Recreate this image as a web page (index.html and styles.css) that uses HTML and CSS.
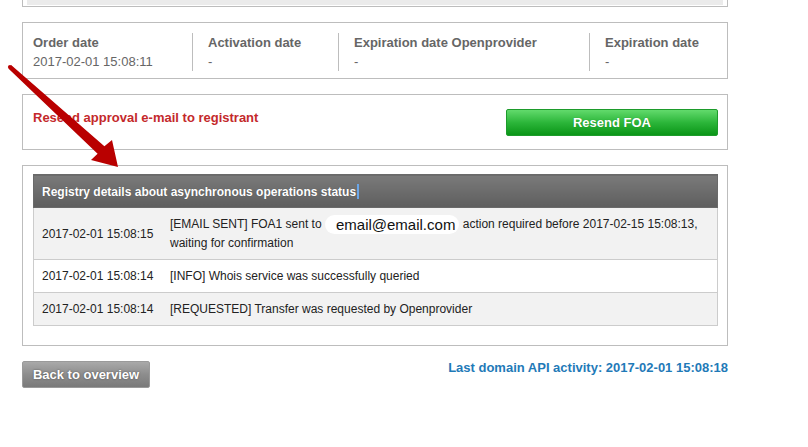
FILE: index.html
```html
<!DOCTYPE html>
<html>
<head>
<meta charset="utf-8">
<link rel="stylesheet" href="styles.css">
</head>
<body>
<div class="page">
  <div class="box top-box"><div class="top-fill"></div></div>

  <div class="box dates">
    <div class="col c1"><div class="label">Order date</div><div class="value">2017-02-01 15:08:11</div></div>
    <div class="col c2"><div class="label">Activation date</div><div class="value">-</div></div>
    <div class="col c3"><div class="label">Expiration date Openprovider</div><div class="value">-</div></div>
    <div class="col c4"><div class="label">Expiration date</div><div class="value">-</div></div>
  </div>

  <div class="box resend">
    <div class="resend-text">Resend approval e-mail to registrant</div>
    <button class="btn-green">Resend FOA</button>
  </div>

  <div class="box registry">
    <table class="ops">
      <thead>
        <tr><th colspan="2">Registry details about asynchronous operations status<span class="caret"></span></th></tr>
      </thead>
      <tbody>
        <tr class="alt">
          <td class="date">2017-02-01 15:08:15</td>
          <td class="msg">[EMAIL SENT] FOA1 sent to <span class="email">email@email.com</span> action required before 2017-02-15 15:08:13,<br>waiting for confirmation</td>
        </tr>
        <tr>
          <td class="date">2017-02-01 15:08:14</td>
          <td class="msg">[INFO] Whois service was successfully queried</td>
        </tr>
        <tr class="alt">
          <td class="date">2017-02-01 15:08:14</td>
          <td class="msg">[REQUESTED] Transfer was requested by Openprovider</td>
        </tr>
      </tbody>
    </table>
  </div>

  <div class="footer">
    <button class="btn-gray">Back to overview</button>
    <div class="last-activity">Last domain API activity: 2017-02-01 15:08:18</div>
  </div>
</div>

<svg class="arrow" width="130" height="180" viewBox="0 0 130 180">
  <polygon points="11.4,65.3 104.4,146.3 112,140 118,167 91,160 97.6,153.7 8.6,68.7" fill="#b90000"/>
  <circle cx="10" cy="67" r="2.1" fill="#b90000"/>
</svg>
</body>
</html>
```

FILE: styles.css
```css
html, body {
  margin: 0;
  padding: 0;
  background: #ffffff;
  font-family: "Liberation Sans", Arial, sans-serif;
}

.page {
  margin-left: 22px;
  width: 706px;
}

.box {
  box-sizing: border-box;
  border: 1px solid #bdbdbd;
  margin-bottom: 15px;
  background: #fff;
}

.top-box {
  border-top: none;
  padding: 0 4px 1px 4px;
}

.top-fill {
  height: 5px;
  background: #ebebeb;
}

/* dates */
.dates {
  display: grid;
  grid-template-columns: 169px 146px 251px 1fr;
  padding: 10px 0 7px 0;
}

.col {
  border-left: 1px solid #bdbdbd;
  padding-left: 15px;
  font-size: 13px;
  line-height: 19px;
  color: #666;
}

.col.c1 {
  border-left: none;
  padding-left: 10px;
}

.label {
  font-weight: bold;
}

/* resend */
.resend {
  display: flex;
  justify-content: space-between;
  align-items: flex-start;
  height: 56px;
  padding: 13px 9px 0 10px;
}

.resend-text {
  color: #c4292b;
  font-size: 13px;
  font-weight: bold;
  line-height: 19px;
}

.btn-green {
  width: 212px;
  height: 27px;
  margin-top: 1px;
  border: 1px solid #1d9b2b;
  border-radius: 2px;
  background: linear-gradient(#62da6c, #2cb63a 50%, #0a9517);
  color: #fff;
  font-family: "Liberation Sans", Arial, sans-serif;
  font-size: 13px;
  font-weight: bold;
  text-shadow: 0 0 1px rgba(0, 80, 0, 0.4);
  padding: 0;
}

/* registry */
.registry {
  padding: 8px 9px 19px 10px;
}

.ops {
  width: 685px;
  border-collapse: collapse;
  border: 1px solid #cccccc;
  font-size: 12px;
  color: #222;
}

.ops th {
  height: 33px;
  box-sizing: border-box;
  padding: 0 0 0 8px;
  text-align: left;
  color: #fff;
  font-weight: bold;
  font-size: 12px;
  background: linear-gradient(#7a7a7a, #5e5e5e);
  border: 1px solid #6a6a6a;
  text-shadow: 0 0 1px rgba(0, 0, 0, 0.3);
}

.caret {
  display: inline-block;
  width: 2px;
  height: 15px;
  margin-left: 1px;
  background: #6aa6e8;
  vertical-align: -3px;
}

.ops td {
  line-height: 19px;
  border-top: 1px solid #cccccc;
  vertical-align: middle;
}

.ops tr.alt td {
  background: #f2f2f2;
}

.ops td.date {
  width: 128px;
  padding: 7px 0 6px 8px;
  white-space: nowrap;
}

.ops td.msg {
  padding: 7px 8px 6px 0;
}

.email {
  display: inline-block;
  vertical-align: top;
  font-size: 15px;
  line-height: 19px;
  color: #111;
  background: #ffffff;
  border-radius: 10px;
  padding: 0 4px 0 11px;
}

/* footer */
.footer {
  display: flex;
  justify-content: space-between;
  align-items: flex-start;
}

.btn-gray {
  width: 128px;
  height: 27px;
  border: 1px solid #9a9a9a;
  border-radius: 2px;
  background: linear-gradient(#a9a9a9, #8d8d8d 50%, #7a7a7a);
  color: #fff;
  font-family: "Liberation Sans", Arial, sans-serif;
  font-size: 13px;
  font-weight: bold;
  text-shadow: 0 0 2px rgba(0, 0, 0, 0.45);
  padding: 0;
}

.last-activity {
  color: #1f7ab8;
  font-size: 13px;
  font-weight: bold;
  line-height: 13px;
}

.arrow {
  position: absolute;
  left: 0;
  top: 0;
}
```
